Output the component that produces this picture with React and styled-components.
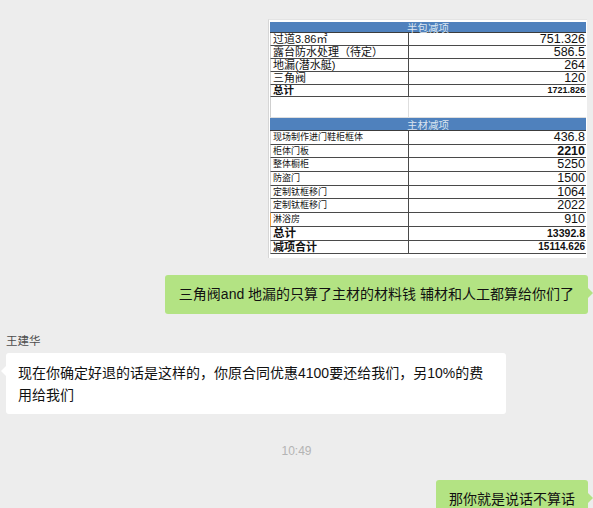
import React from "react";
import styled, { createGlobalStyle } from "styled-components";

const Global = createGlobalStyle`
  html, body { margin: 0; padding: 0; background: #ededed; }
  body { font-family: "Liberation Sans", "Noto Sans CJK SC", sans-serif; }
  * { box-sizing: border-box; }
`;

const Page = styled.div`
  width: 593px;
  height: 508px;
  overflow: hidden;
  background: #ededed;
  padding: 19px 5px 0 6px;
  display: flex;
  flex-direction: column;
`;

const RightRow = styled.div`
  display: flex;
  justify-content: flex-end;
  margin-top: ${(p) => p.$gap || 0}px;
  padding-right: ${(p) => p.$pr || 0}px;
`;

const LeftBlock = styled.div`
  display: flex;
  flex-direction: column;
  align-items: flex-start;
  margin-top: ${(p) => p.$gap || 0}px;
`;

/* ---------- spreadsheet picture ---------- */
const Sheet = styled.div`
  width: 319px;
  height: 239px;
  background: #ffffff;
  border-left: 1px solid #d6d6d6;
  border-top: 1px solid #e4e4e4;
  padding: 2px 1px 0 1px;
  display: flex;
  flex-direction: column;
`;

const HeaderBar = styled.div`
  height: ${(p) => p.$h}px;
  background: #4f81bd;
  color: #dbe5f1;
  font-size: 10.5px;
  line-height: ${(p) => p.$h}px;
  text-align: center;
  border-bottom: 1px solid #3c3c3c;
  font-family: "Noto Sans CJK SC", sans-serif;
`;

const SheetRow = styled.div`
  display: grid;
  grid-template-columns: 138px 1fr;
  height: ${(p) => p.$h}px;
  border-bottom: 1px solid ${(p) => (p.$blank ? "#dedede" : "#4a4a4a")};
  border-left: 1px solid ${(p) => (p.$accent ? "#f0a040" : "#cfcfcf")};
`;

const Label = styled.div`
  font-size: ${(p) => p.$size}px;
  font-weight: ${(p) => (p.$bold ? 700 : 400)};
  line-height: ${(p) => p.$h - 1}px;
  padding-left: 2px;
  white-space: nowrap;
  overflow: hidden;
  color: #111;
  border-right: 1px solid ${(p) => (p.$blank ? "#dedede" : "#4a4a4a")};
`;

const Value = styled.div`
  font-size: ${(p) => p.$size}px;
  font-weight: ${(p) => (p.$bold ? 700 : 400)};
  line-height: ${(p) => p.$h - 1}px;
  text-align: right;
  padding-right: 1px;
  white-space: nowrap;
  color: #111;
`;

/* ---------- chat ---------- */
const Bubble = styled.div`
  position: relative;
  font-size: 14px;
  line-height: ${(p) => p.$lh}px;
  color: #111;
  background: ${(p) => (p.$mine ? "#b3e383" : "#ffffff")};
  border-radius: 3px;
  padding: ${(p) => p.$pad};
  max-width: 500px;
  width: ${(p) => (p.$w ? `${p.$w}px` : "auto")};

  &::after {
    content: "";
    position: absolute;
    top: 13px;
    ${(p) => (p.$mine ? "right: -5px;" : "left: -5px;")}
    border-top: 5px solid transparent;
    border-bottom: 5px solid transparent;
    ${(p) =>
      p.$mine
        ? "border-left: 5px solid #b3e383;"
        : "border-right: 5px solid #ffffff;"}
  }
`;

const Name = styled.div`
  font-size: 11.5px;
  line-height: 16px;
  color: #4d4d4d;
  font-family: "Noto Sans CJK SC", sans-serif;
`;

const NameGap = styled.div`
  height: 5px;
`;

const Time = styled.div`
  margin-top: 29px;
  text-align: center;
  font-size: 12px;
  line-height: 16px;
  color: #b4b4b4;
  padding-right: 1px;
`;

const upper = [
  ["过道3.86㎡", "751.326"],
  ["露台防水处理（待定）", "586.5"],
  ["地漏(潜水艇)", "264"],
  ["三角阀", "120"],
];

const lower = [
  ["现场制作进门鞋柜框体", "436.8", false],
  ["柜体门板", "2210", true],
  ["整体橱柜", "5250", false],
  ["防盗门", "1500", false],
  ["定制钛框移门", "1064", false],
  ["定制钛框移门", "2022", false],
  ["淋浴房", "910", false, true],
];

function SpreadSheet() {
  const uh = 13;
  const lh = 13.7;
  return (
    <Sheet>
      <HeaderBar $h={11}>半包减项</HeaderBar>
      {upper.map(([a, b]) => (
        <SheetRow key={a} $h={uh}>
          <Label $size={11} $h={uh}>{a}</Label>
          <Value $size={12.5} $h={uh}>{b}</Value>
        </SheetRow>
      ))}
      <SheetRow $h={12}>
        <Label $size={10.5} $bold $h={12}>总计</Label>
        <Value $size={9} $bold $h={12}>1721.826</Value>
      </SheetRow>
      <SheetRow $h={21} $blank>
        <Label $blank $h={21} $size={10} />
        <Value $h={21} $size={10} />
      </SheetRow>
      <HeaderBar $h={13}>主材减项</HeaderBar>
      {lower.map(([a, b, bold, accent], i) => (
        <SheetRow key={i} $h={lh} $accent={accent}>
          <Label $size={9} $h={lh}>{a}</Label>
          <Value $size={12.5} $bold={bold} $h={lh}>{b}</Value>
        </SheetRow>
      ))}
      <SheetRow $h={lh}>
        <Label $size={11.5} $bold $h={lh}>总计</Label>
        <Value $size={10.5} $bold $h={lh}>13392.8</Value>
      </SheetRow>
      <SheetRow $h={lh}>
        <Label $size={11} $bold $h={lh}>减项合计</Label>
        <Value $size={10} $bold $h={lh}>15114.626</Value>
      </SheetRow>
    </Sheet>
  );
}

export default function App() {
  return (
    <>
      <Global />
      <Page>
        <RightRow $pr={1}>
          <SpreadSheet />
        </RightRow>
        <RightRow $gap={17}>
          <Bubble $mine $lh={19} $pad="10px 14px 10px 14px">
            三角阀and 地漏的只算了主材的材料钱 辅材和人工都算给你们了
          </Bubble>
        </RightRow>
        <LeftBlock $gap={18}>
          <Name>王建华</Name>
          <NameGap />
          <Bubble $lh={22} $pad="9px 12px 8px 12px">
            现在你确定好退的话是这样的，你原合同优惠4100要还给我们，另10%的费用给我们
          </Bubble>
        </LeftBlock>
        <Time>10:49</Time>
        <RightRow $gap={21}>
          <Bubble $mine $lh={19} $pad="10px 13px 10px 13px">
            那你就是说话不算话
          </Bubble>
        </RightRow>
      </Page>
    </>
  );
}
